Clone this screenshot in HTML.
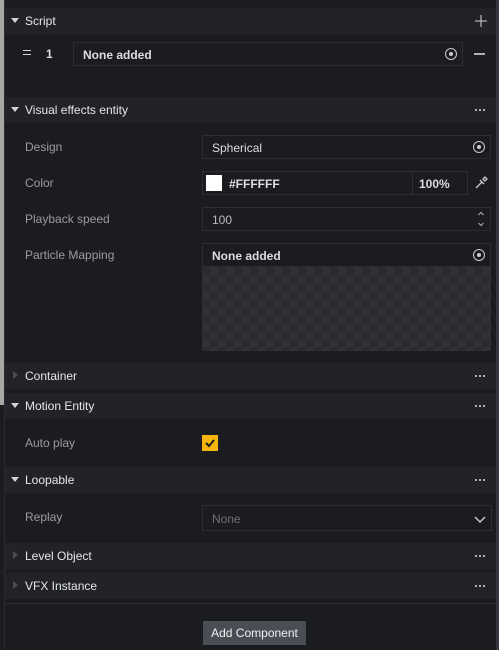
<!DOCTYPE html>
<html><head><style>
*{box-sizing:border-box;margin:0;padding:0}
body{width:499px;height:650px;background:#1b1c20;font-family:"Liberation Sans",sans-serif;font-size:12px;color:#dcdde0;position:relative;overflow:hidden}
.a{position:absolute}
.hd{position:absolute;left:5px;width:491px;height:26px;background:#222328;color:#e4e6ea}
.hd .t{position:absolute;left:20px;top:6px}
.tri{position:absolute;left:6px;top:10px;width:0;height:0;border-left:4px solid transparent;border-right:4px solid transparent;border-top:5px solid #d0d2d6}
.tr{position:absolute;left:8px;top:8px;width:0;height:0;border-top:4px solid transparent;border-bottom:4px solid transparent;border-left:5px solid #4a4c52}
.dots{position:absolute;right:11px;top:12px;width:10px;height:2px;background:linear-gradient(90deg,#b0b2b8 0 2px,transparent 2px 4px,#b0b2b8 4px 6px,transparent 6px 8px,#b0b2b8 8px 10px)}
.lab{position:absolute;left:25px;color:#9a9ca2}
.in{position:absolute;border:1px solid #2d2e33;background:#1b1c20;height:24px}
.in span{position:absolute;left:9px;top:5px}
.ring{position:absolute;width:12px;height:12px;border:1.5px solid #c8cacf;border-radius:50%}
.ring:after{content:"";position:absolute;left:2.5px;top:2.5px;width:4px;height:4px;border-radius:50%;background:#c8cacf}
</style></head><body>
<div class="a" style="left:0;top:0;width:4px;height:405px;background:#a8a7a5"></div>
<div class="a" style="left:4px;top:0;width:1px;height:650px;background:#2a2b30"></div>
<div class="a" style="left:496px;top:0;width:3px;height:650px;background:#34353a"></div>

<div class="hd" style="top:8px"><div class="tri"></div><div class="t">Script</div><svg class="a" style="right:9px;top:7px" width="12" height="12"><path d="M6 0 V12 M0 6 H12" stroke="#b0b2b8" stroke-width="1.3"/></svg></div>
<div class="a" style="left:23px;top:50px;width:8px;height:1.3px;background:#d0d2d6"></div>
<div class="a" style="left:23px;top:54px;width:8px;height:1.3px;background:#d0d2d6"></div>
<div class="a" style="left:46px;top:47px;font-weight:bold">1</div>
<div class="in" style="left:73px;top:42px;width:390px"><span style="font-weight:bold">None added</span><div class="ring" style="right:5px;top:5px"></div></div>
<div class="a" style="left:474px;top:53px;width:11px;height:1.5px;background:#b0b2b8"></div>

<div class="hd" style="top:97px"><div class="tri"></div><div class="t">Visual effects entity</div><div class="dots"></div></div>
<div class="lab" style="top:140px">Design</div>
<div class="in" style="left:202px;top:135px;width:289px"><span>Spherical</span><div class="ring" style="right:5px;top:5px"></div></div>
<div class="lab" style="top:176px">Color</div>
<div class="in" style="left:202px;top:171px;width:266px"><div class="a" style="left:3px;top:3px;width:16px;height:16px;background:#fff"></div><span style="left:26px;font-weight:bold">#FFFFFF</span><div class="a" style="left:209px;top:0;width:1px;height:22px;background:#2d2e33"></div><span style="left:216px;font-weight:bold">100%</span></div>
<svg class="a" style="left:474px;top:176px" width="14" height="14" viewBox="0 0 14 14"><path d="M2 12 L8 6 M6 4 L10 8 M9 3 L11 1 L13 3 L11 5 Z" stroke="#c8cacf" stroke-width="1.3" fill="none"/></svg>
<div class="lab" style="top:212px">Playback speed</div>
<div class="in" style="left:202px;top:207px;width:289px"><span style="color:#b8babe">100</span><svg class="a" style="right:5px;top:3px" width="8" height="16"><path d="M1.5 4 L4 1.5 L6.5 4 M1.5 12 L4 14.5 L6.5 12" stroke="#b0b2b8" stroke-width="1" fill="none"/></svg></div>
<div class="lab" style="top:248px">Particle Mapping</div>
<div class="in" style="left:202px;top:243px;width:289px"><span style="font-weight:bold">None added</span><div class="ring" style="right:5px;top:5px"></div></div>
<div class="a" style="left:202px;top:267px;width:289px;height:84px;background-color:#2a2b2f;background-image:linear-gradient(45deg,#313237 25%,transparent 25%,transparent 75%,#313237 75%),linear-gradient(45deg,#313237 25%,transparent 25%,transparent 75%,#313237 75%);background-size:16px 16px;background-position:0 0,8px 8px"></div>

<div class="hd" style="top:363px"><div class="tr"></div><div class="t">Container</div><div class="dots"></div></div>
<div class="hd" style="top:393px"><div class="tri"></div><div class="t">Motion Entity</div><div class="dots"></div></div>
<div class="lab" style="top:436px">Auto play</div>
<div class="a" style="left:202px;top:435px;width:16px;height:16px;background:#f6b40e"><svg width="16" height="16"><path d="M4 8 L7 11 L12 5" stroke="#1b1c20" stroke-width="2" fill="none"/></svg></div>
<div class="hd" style="top:467px"><div class="tri"></div><div class="t">Loopable</div><div class="dots"></div></div>
<div class="lab" style="top:510px">Replay</div>
<div class="in" style="left:202px;top:505px;width:290px;height:26px"><span style="color:#6e7076;top:6px">None</span><svg class="a" style="right:5px;top:8px" width="12" height="10"><path d="M1 3 L6 8 L11 3" stroke="#c8cacf" stroke-width="1.4" fill="none"/></svg></div>
<div class="hd" style="top:543px"><div class="tr"></div><div class="t">Level Object</div><div class="dots"></div></div>
<div class="hd" style="top:573px"><div class="tr"></div><div class="t">VFX Instance</div><div class="dots"></div></div>
<div class="a" style="left:5px;top:603px;width:491px;height:1px;background:#2d2e33"></div>
<div class="a" style="left:203px;top:621px;width:103px;height:24px;background:#4a4d54;color:#f0f1f3;text-align:center;line-height:24px">Add Component</div>
</body></html>
